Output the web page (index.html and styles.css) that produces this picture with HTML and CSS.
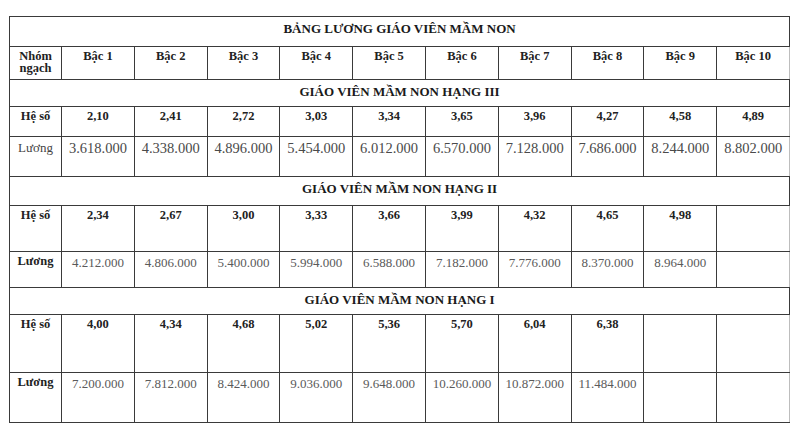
FILE: index.html
```html
<!DOCTYPE html>
<html lang="vi">
<head>
<meta charset="utf-8">
<title>Bảng lương giáo viên mầm non</title>
<link rel="stylesheet" href="styles.css">
</head>
<body>
<table class="salary">
  <colgroup>
    <col class="c-label">
    <col class="c-step"><col class="c-step"><col class="c-step"><col class="c-step"><col class="c-step">
    <col class="c-step"><col class="c-step"><col class="c-step"><col class="c-step"><col class="c-step">
  </colgroup>
  <tr class="r-title"><td colspan="11" class="title">BẢNG LƯƠNG GIÁO VIÊN MẦM NON</td></tr>
  <tr class="r-head">
    <td class="lbl">Nhóm ngạch</td>
    <td class="bold">Bậc 1</td><td class="bold">Bậc 2</td><td class="bold">Bậc 3</td><td class="bold">Bậc 4</td><td class="bold">Bậc 5</td>
    <td class="bold">Bậc 6</td><td class="bold">Bậc 7</td><td class="bold">Bậc 8</td><td class="bold lite">Bậc 9</td><td class="bold">Bậc 10</td>
  </tr>
  <tr class="r-g1"><td colspan="11" class="group">GIÁO VIÊN MẦM NON HẠNG III</td></tr>
  <tr class="r-h1">
    <td class="lbl">Hệ số</td>
    <td class="bold">2,10</td><td class="bold">2,41</td><td class="bold">2,72</td><td class="bold">3,03</td><td class="bold">3,34</td>
    <td class="bold">3,65</td><td class="bold">3,96</td><td class="bold">4,27</td><td class="bold lite">4,58</td><td class="bold">4,89</td>
  </tr>
  <tr class="r-l1">
    <td class="lbl-reg">Lương</td>
    <td class="big">3.618.000</td><td class="big">4.338.000</td><td class="big">4.896.000</td><td class="big">5.454.000</td><td class="big">6.012.000</td>
    <td class="big">6.570.000</td><td class="big">7.128.000</td><td class="big">7.686.000</td><td class="big lite">8.244.000</td><td class="big">8.802.000</td>
  </tr>
  <tr class="r-g2"><td colspan="11" class="group">GIÁO VIÊN MẦM NON HẠNG II</td></tr>
  <tr class="r-h2">
    <td class="lbl">Hệ số</td>
    <td class="bold">2,34</td><td class="bold">2,67</td><td class="bold">3,00</td><td class="bold">3,33</td><td class="bold">3,66</td>
    <td class="bold">3,99</td><td class="bold">4,32</td><td class="bold">4,65</td><td class="bold lite">4,98</td><td></td>
  </tr>
  <tr class="r-l2">
    <td class="lbl">Lương</td>
    <td class="val">4.212.000</td><td class="val">4.806.000</td><td class="val">5.400.000</td><td class="val">5.994.000</td><td class="val">6.588.000</td>
    <td class="val">7.182.000</td><td class="val">7.776.000</td><td class="val">8.370.000</td><td class="val lite">8.964.000</td><td></td>
  </tr>
  <tr class="r-g3"><td colspan="11" class="group">GIÁO VIÊN MẦM NON HẠNG I</td></tr>
  <tr class="r-h3">
    <td class="lbl">Hệ số</td>
    <td class="bold">4,00</td><td class="bold">4,34</td><td class="bold">4,68</td><td class="bold">5,02</td><td class="bold">5,36</td>
    <td class="bold">5,70</td><td class="bold">6,04</td><td class="bold">6,38</td><td class="lite"></td><td></td>
  </tr>
  <tr class="r-l3">
    <td class="lbl">Lương</td>
    <td class="val">7.200.000</td><td class="val">7.812.000</td><td class="val">8.424.000</td><td class="val">9.036.000</td><td class="val">9.648.000</td>
    <td class="val">10.260.000</td><td class="val">10.872.000</td><td class="val">11.484.000</td><td class="lite"></td><td></td>
  </tr>
</table>
</body>
</html>
```

FILE: styles.css
```css
html, body {
  margin: 0;
  padding: 0;
  background: #ffffff;
}

body {
  padding: 16px 0 0 9px;
  font-family: "Liberation Serif", "Times New Roman", serif;
  color: #222;
}

.salary {
  border-collapse: collapse;
  table-layout: fixed;
  width: 780px;
  border-left: 1px solid #444;
  border-top: 1px solid #555;
  border-right: 1px solid #bdbdbd;
  border-bottom: 1px solid #bdbdbd;
}

.c-label { width: 52px; }
.c-step { width: 72.8px; }

.salary td {
  border: 1px solid #3a3a3a;
  vertical-align: top;
  text-align: center;
  padding: 2px 0 0 0;
  line-height: 13px;
  font-size: 13px;
  white-space: nowrap;
  overflow: hidden;
}

.salary td.lite {
  border-left-color: #bcbcbc;
}

.salary td:last-child {
  border-right-color: #bdbdbd;
}

.salary td.title,
.salary td.group {
  font-weight: bold;
  font-size: 13px;
  color: #1a1a1a;
  padding-top: 5px;
  border-right-color: #3a3a3a;
}

.salary td.lbl {
  font-weight: bold;
  font-size: 12.5px;
  text-align: center;
  padding: 3px 2px 0 2px;
  white-space: normal;
  line-height: 12px;
}

.salary td.lbl-reg {
  font-size: 13px;
  text-align: center;
  padding-top: 4px;
  color: #444;
}

.salary td.bold {
  font-weight: bold;
  font-size: 12.5px;
  color: #222;
  padding-top: 3px;
}

.salary td.big {
  font-size: 14.5px;
  color: #4a4a4a;
  padding-top: 4px;
  line-height: 15px;
}

.salary td.val {
  font-size: 13px;
  color: #5a5a5a;
  padding-top: 4px;
}

.r-title td { height: 24px; }
.r-head td { height: 29px; }
.r-g1 td { height: 21px; }
.r-h1 td { height: 26px; }
.r-l1 td { height: 35px; }
.r-g2 td { height: 23px; }
.r-h2 td { height: 42px; }
.r-l2 td { height: 31px; }
.r-g3 td { height: 21px; }
.r-h3 td { height: 54px; }
.r-l3 td { height: 45px; }
```
